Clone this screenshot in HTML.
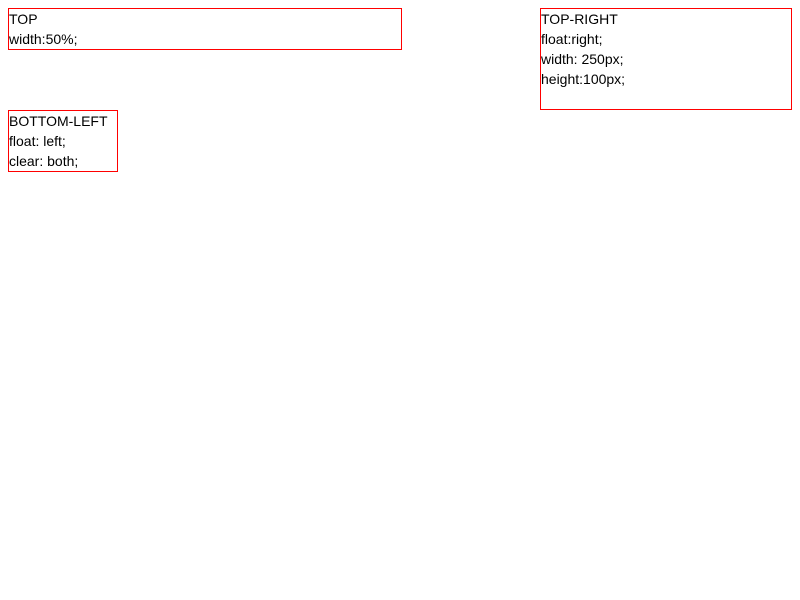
<!DOCTYPE html>
<html><head><style>
body{margin:8px;font-family:"Liberation Sans",sans-serif;font-size:14px;line-height:20px;color:#000;background:#fff}
div{border:1px solid red}
.t{width:392px;height:40px}
.r{position:absolute;left:540px;top:8px;width:250px;height:100px}
.b{position:absolute;left:8px;top:110px;width:108px;height:60px}
</style></head><body>
<div class="t">TOP<br>width:50%;</div>
<div class="r">TOP-RIGHT<br>float:right;<br>width: 250px;<br>height:100px;</div>
<div class="b">BOTTOM-LEFT<br>float: left;<br>clear: both;</div>
</body></html>
